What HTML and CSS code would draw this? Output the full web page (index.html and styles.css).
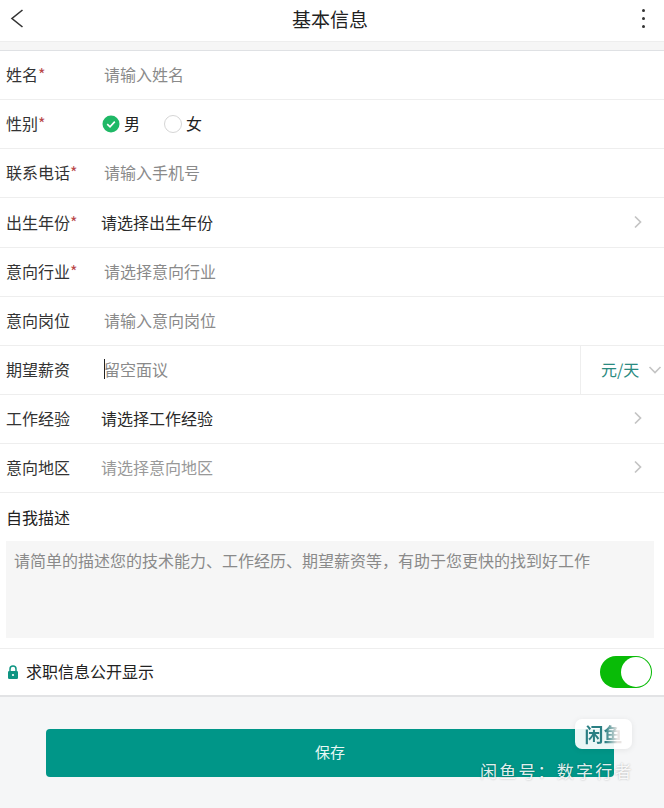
FILE: index.html
```html
<!DOCTYPE html>
<html lang="zh-CN">
  <head>
    <meta charset="UTF-8" />
    <title>基本信息</title>
    <link rel="stylesheet" href="styles.css">
  </head>
  <body>
    <div class="header">
      <svg class="back" width="14" height="20" viewBox="0 0 14 20"><path d="M12.5 1 L2 9.5 L12.5 18" fill="none" stroke="#333" stroke-width="1.6"/></svg>
      <h1>基本信息</h1>
      <div class="more"><i></i><i></i><i></i></div>
    </div>
    <div class="strip"></div>

    <div class="row">
      <span class="label">姓名<em>*</em></span>
      <span class="hint">请输入姓名</span>
    </div>
    <div class="row">
      <span class="label">性别<em>*</em></span>
      <div class="radios">
        <svg width="18" height="18" viewBox="0 0 18 18"><circle cx="9" cy="9" r="8.5" fill="#1fb866"/><path d="M5.2 9.2 L8 11.8 L12.8 6.6" fill="none" stroke="#fff" stroke-width="1.6"/></svg>
        <span class="radio-text">男</span>
        <svg class="second-radio" width="18" height="18" viewBox="0 0 18 18"><circle cx="9" cy="9" r="8.5" fill="#fff" stroke="#d5d5d5"/></svg>
        <span class="radio-text">女</span>
      </div>
    </div>
    <div class="row">
      <span class="label">联系电话<em>*</em></span>
      <span class="hint">请输入手机号</span>
    </div>
    <div class="row row-tall">
      <span class="label">出生年份<em>*</em></span>
      <span class="pick">请选择出生年份</span>
      <svg class="arrow" width="10" height="14" viewBox="0 0 10 14"><path d="M2 1.5 L7.5 7 L2 12.5" fill="none" stroke="#c4c4c4" stroke-width="1.7"/></svg>
    </div>
    <div class="row">
      <span class="label">意向行业<em>*</em></span>
      <span class="hint">请选择意向行业</span>
    </div>
    <div class="row">
      <span class="label">意向岗位</span>
      <span class="hint">请输入意向岗位</span>
    </div>
    <div class="row">
      <span class="label">期望薪资</span>
      <span class="hint"><b class="caret"></b>留空面议</span>
      <div class="unit">
        <span>元/天</span>
        <svg width="14" height="10" viewBox="0 0 14 10"><path d="M1.5 2 L7 7.5 L12.5 2" fill="none" stroke="#c4c4c4" stroke-width="1.6"/></svg>
      </div>
    </div>
    <div class="row">
      <span class="label">工作经验</span>
      <span class="pick">请选择工作经验</span>
      <svg class="arrow" width="10" height="14" viewBox="0 0 10 14"><path d="M2 1.5 L7.5 7 L2 12.5" fill="none" stroke="#c4c4c4" stroke-width="1.7"/></svg>
    </div>
    <div class="row">
      <span class="label">意向地区</span>
      <span class="pick pick-empty">请选择意向地区</span>
      <svg class="arrow" width="10" height="14" viewBox="0 0 10 14"><path d="M2 1.5 L7.5 7 L2 12.5" fill="none" stroke="#c4c4c4" stroke-width="1.7"/></svg>
    </div>

    <div class="desc">
      <div class="desc-title">自我描述</div>
      <div class="textarea">请简单的描述您的技术能力、工作经历、期望薪资等，有助于您更快的找到好工作</div>
    </div>

    <div class="public">
      <svg width="12" height="14" viewBox="0 0 12 14"><path d="M3 6.5 V4 a3 3 0 0 1 6 0 V6.5" fill="none" stroke="#0f9583" stroke-width="1.5"/><rect x="1" y="6" width="10" height="8" rx="1.2" fill="#0f9583"/><circle cx="6" cy="10" r="1.1" fill="#fff"/></svg>
      <span>求职信息公开显示</span>
      <div class="switch"><i></i></div>
    </div>

    <div class="footer">
      <button class="save">保存</button>
    </div>

    <div class="mark-badge"><span>闲鱼</span></div>
    <div class="mark-text">闲鱼号：数字行者</div>
  </body>
</html>
```

FILE: styles.css
```css
*{
    margin: 0;
    padding: 0;
    box-sizing: border-box;
}
html, body{
    height: 100%;
}
body{
    position: relative;
    display: flex;
    flex-direction: column;
    background: #fff;
    color: #222;
    font-family: "Noto Sans CJK SC", "Liberation Sans", sans-serif;
    font-size: 16px;
    overflow: hidden;
}
.header{
    height: 41px;
    flex: none;
    display: flex;
    align-items: center;
    justify-content: center;
    position: relative;
    padding: 0 4px 5px 0;
}
.header h1{
    font-size: 19px;
    font-weight: 400;
    color: #222;
}
.back{
    position: absolute;
    left: 10px;
    top: 9px;
}
.more{
    position: absolute;
    right: 19px;
    top: 9px;
    display: flex;
    flex-direction: column;
    gap: 5px;
}
.more i{
    width: 3px;
    height: 3px;
    border-radius: 50%;
    background: #333;
}
.strip{
    height: 10px;
    flex: none;
    background: #f6f6f6;
    border-top: 1px solid #eee;
    border-bottom: 1px solid #dfe1e4;
}
.row{
    height: 49px;
    flex: none;
    display: flex;
    align-items: center;
    padding-left: 6px;
    border-bottom: 1px solid #eee;
}
.row-tall{
    height: 50px;
}
.label{
    width: 95px;
    flex: none;
    margin-bottom: 2px;
    color: #333;
}
.label em{
    font-style: normal;
    color: #b8474a;
}
.hint{
    margin: 0 0 2px 3px;
    color: #8a8a8a;
    display: flex;
    align-items: center;
}
.caret{
    width: 1px;
    height: 20px;
    margin-right: -1px;
    background: #222;
}
.pick{
    margin: 0 0 2px 0;
    color: #2a2a2a;
}
.pick-empty{
    color: #999;
}
.arrow{
    margin: 0 21px 2px auto;
}
.radios{
    margin-left: 1px;
    display: flex;
    align-items: center;
}
.radio-text{
    margin: 0 0 2px 4px;
    color: #222;
}
.second-radio{
    margin-left: 24px;
}
.unit{
    margin-left: auto;
    width: 84px;
    height: 48px;
    display: flex;
    align-items: center;
    padding-left: 20px;
    border-left: 1px solid #eee;
    color: #2a8a80;
}
.unit span{
    margin-bottom: 2px;
}
.unit svg{
    margin-left: 9px;
}
.desc{
    height: 156px;
    flex: none;
    padding: 0 10px 0 6px;
    border-bottom: 1px solid #eee;
}
.desc-title{
    height: 48px;
    line-height: 48px;
    color: #222;
}
.textarea{
    height: 97px;
    padding: 8px;
    background: #f6f6f6;
    color: #8a8a8a;
    line-height: 22px;
}
.public{
    height: 48px;
    flex: none;
    display: flex;
    align-items: center;
    padding: 0 12px 0 7px;
    border-bottom: 2px solid #e2e3e5;
    color: #222;
}
.public span{
    margin: 0 0 2px 7px;
}
.switch{
    margin-left: auto;
    width: 52px;
    height: 32px;
    padding: 1px;
    border-radius: 16px;
    background: #09bb07;
    display: flex;
    justify-content: flex-end;
}
.switch i{
    width: 30px;
    height: 30px;
    border-radius: 50%;
    background: #fff;
}
.footer{
    flex: 1;
    background: #f5f6f7;
    padding: 32px 50px 0 46px;
}
.save{
    width: 100%;
    height: 48px;
    padding-bottom: 3px;
    border: none;
    border-radius: 4px;
    background: #009688;
    color: #e8f8f5;
    font-family: inherit;
    font-size: 15px;
}
.mark-badge{
    position: absolute;
    left: 575px;
    top: 719px;
    width: 57px;
    height: 30px;
    border-radius: 7px;
    background: rgba(255, 255, 255, 0.92);
    box-shadow: 0 1px 6px rgba(0, 0, 0, 0.08);
    font-size: 19px;
    font-weight: 700;
    line-height: 30px;
    text-align: center;
}
.mark-badge span{
    background: linear-gradient(90deg, #2a7f83 55%, #e8e4e2 85%);
    -webkit-background-clip: text;
    background-clip: text;
    color: transparent;
}
.mark-text{
    position: absolute;
    left: 480px;
    top: 758px;
    color: rgba(255, 255, 255, 0.9);
    font-size: 17px;
    letter-spacing: 2.2px;
    white-space: nowrap;
    text-shadow: 0 0 2px rgba(0, 0, 0, 0.3);
}
```
